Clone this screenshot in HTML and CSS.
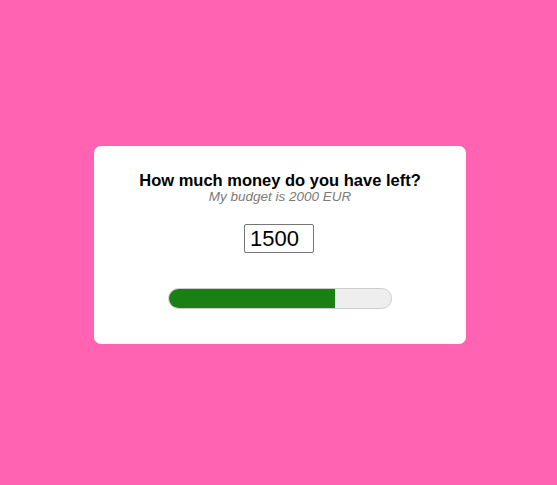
FILE: index.html
```html
<!DOCTYPE html>
<html>
<head>
<meta charset="utf-8">
<link rel="stylesheet" href="styles.css">
</head>
<body>
<div class="card">
  <h1 class="title">How much money do you have left?</h1>
  <p class="subtitle">My budget is 2000 EUR</p>
  <input class="amount" type="text" value="1500">
  <div class="track"><div class="fill" style="width: 75%"></div></div>
</div>
</body>
</html>
```
FILE: styles.css
```css
html, body {
  margin: 0;
  height: 100%;
}
body {
  background: #ff63b1;
  display: flex;
  align-items: center;
  justify-content: center;
  padding-left: 3px;
  padding-top: 5px;
  box-sizing: border-box;
  font-family: "Liberation Sans", Arial, sans-serif;
}
.card {
  width: 372px;
  box-sizing: border-box;
  background: #fff;
  border-radius: 7px;
  padding: 25px 0 35px;
  display: flex;
  flex-direction: column;
  align-items: center;
}
.title {
  margin: 0;
  font-size: 16.5px;
  font-weight: bold;
  line-height: 18px;
  color: #000;
}
.subtitle {
  margin: 0;
  font-size: 13.5px;
  line-height: 15px;
  font-style: italic;
  color: #7a7a7a;
}
.amount {
  margin-top: 20px;
  margin-right: 2px;
  width: 70px;
  height: 29px;
  box-sizing: border-box;
  border: 1px solid #767676;
  border-radius: 2px;
  padding: 0 5px;
  font-family: "Liberation Sans", Arial, sans-serif;
  font-size: 22px;
  color: #000;
  outline: none;
}
.track {
  margin-top: 35px;
  margin-right: 1px;
  width: 224px;
  height: 21px;
  box-sizing: border-box;
  background: #eeeeee;
  border: 1px solid #cccccc;
  border-radius: 11px;
  overflow: hidden;
  display: flex;
}
.fill {
  height: 100%;
  background: #1b8013;
}
```
